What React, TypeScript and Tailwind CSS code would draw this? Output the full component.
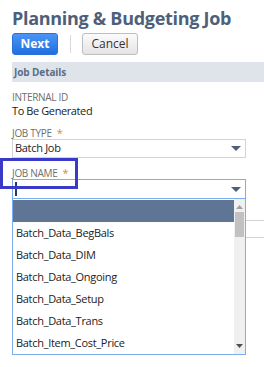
import React from "react";

const Caret = () => (
  <svg width="10" height="5" viewBox="0 0 10 5">
    <path d="M0 0 H10 L5 5 Z" fill="#4d5f79" />
  </svg>
);

export default function App() {
  const items = [
    "Batch_Data_BegBals",
    "Batch_Data_DIM",
    "Batch_Data_Ongoing",
    "Batch_Data_Setup",
    "Batch_Data_Trans",
    "Batch_Item_Cost_Price",
  ];
  return (
    <div
      className="relative w-[264px] h-[367px] bg-white overflow-hidden"
      style={{ fontFamily: '"Open Sans", sans-serif' }}
    >
      <div className="pl-[12px] pt-[6px]">
        <h1 className="text-[18px] leading-[24px] font-bold text-[#4d5f79] tracking-[-0.3px]">
          Planning &amp; Budgeting Job
        </h1>
        <div className="flex items-center mt-[3px] h-[22px]">
          <button className="w-[46px] h-[22px] rounded-[3px] bg-gradient-to-b from-[#4a95f5] to-[#1f6fe0] border border-[#2b72d8] text-white text-[12px] font-bold leading-none">
            Next
          </button>
          <div className="w-px h-[18px] bg-[#dadada] ml-[12px] mr-[11px]" />
          <button className="w-[56px] h-[22px] rounded-[3px] bg-gradient-to-b from-[#fbfbfb] to-[#e4e4e4] border border-[#bdbdbd] text-[#333] text-[12px] leading-none">
            Cancel
          </button>
        </div>
        <div className="mt-[7px] h-[20px] bg-[#dfe4eb] flex items-center pl-[2px]">
          <span className="text-[10px] font-bold text-[#5a6d87] tracking-[-0.1px]">Job Details</span>
        </div>
        <div className="mt-[9px] text-[10px] leading-[13px] text-[#6f6f6f] tracking-[-0.3px]">INTERNAL ID</div>
        <div className="text-[11px] leading-[14px] text-[#222] tracking-[-0.4px]">To Be Generated</div>
        <div className="mt-[9px] text-[10px] leading-[12px] text-[#6f6f6f] tracking-[-0.3px] flex">
          JOB TYPE <span className="text-[#e08c1e] ml-[5px] text-[11px] leading-[12px]">*</span>
        </div>
        <div className="w-[234px] h-[19px] border border-[#d3d3d3] flex items-center justify-between pl-[2px] pr-[4px]">
          <span className="text-[11px] text-[#222] tracking-[-0.3px]">Batch Job</span>
          <Caret />
        </div>
        <div className="mt-[9px] text-[10px] leading-[12px] text-[#6f6f6f] tracking-[-0.3px] flex">
          JOB NAME <span className="text-[#e08c1e] ml-[5px] text-[11px] leading-[12px]">*</span>
        </div>
        <div className="w-[234px] h-[20px] border border-[#7aaef0] flex items-center justify-between pl-[2px] pr-[4px]">
          <div className="w-[2px] h-[14px] bg-[#243a6e]" />
          <Caret />
        </div>
        <div className="relative w-[234px] h-[156px] border border-t-0 border-[#7aaef0] flex">
          <div className="flex-1">
            <div className="h-[22px] bg-[#5f7595] mt-px" />
            {items.map((it) => (
              <div key={it} className="h-[22px] flex items-center pl-[3px] text-[11px] text-[#222] tracking-[-0.3px]">
                {it}
              </div>
            ))}
          </div>
          <div className="w-[11px] bg-[#f0f0f0] flex flex-col items-center">
            <svg width="7" height="4" viewBox="0 0 7 4" className="mt-[6px]">
              <path d="M0 4 L3.5 0 L7 4 Z" fill="#a0a0a0" />
            </svg>
            <div className="mt-[3px] w-[9px] h-[25px] bg-[#c1c1c1]" />
            <div className="flex-1" />
            <svg width="7" height="4" viewBox="0 0 7 4" className="mb-[6px]">
              <path d="M0 0 L7 0 L3.5 4 Z" fill="#505050" />
            </svg>
          </div>
        </div>
      </div>
      <div className="absolute left-[246px] top-[220px] w-[18px] h-px bg-[#d3d3d3]" />
      <div className="absolute left-[246px] top-[237px] w-[18px] h-px bg-[#d3d3d3]" />
      <div className="absolute left-0 top-[158px] w-[78px] h-[31px] border-[3px] border-[#3a3ac8]" />
    </div>
  );
}
